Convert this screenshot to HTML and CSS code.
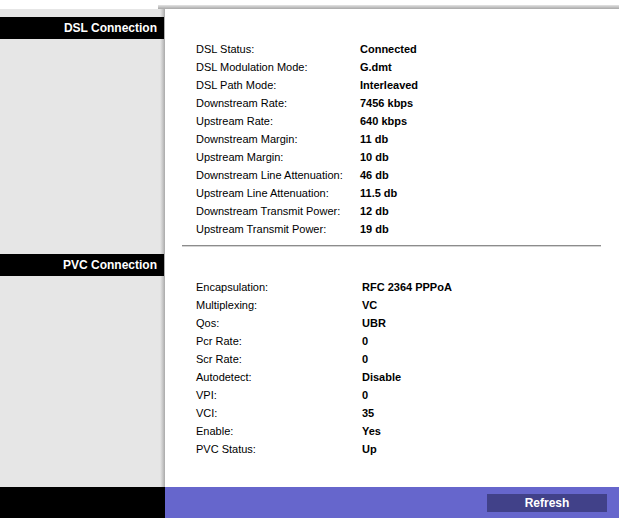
FILE: index.html
```html
<!DOCTYPE html>
<html lang="en">
<head>
    <meta charset="UTF-8">
    <title>Status - DSL Connection</title>
    <link rel="stylesheet" href="styles.css">
</head>
<body>
    <div class="top-strip">
        <div class="top-side"></div>
        <div class="top-line"></div>
    </div>

    <div class="section section-dsl">
        <div class="side">
            <div class="side-title">DSL Connection</div>
        </div>
        <div class="content">
            <div class="info">
                <div class="label">DSL Status:</div><div class="value">Connected</div>
                <div class="label">DSL Modulation Mode:</div><div class="value">G.dmt</div>
                <div class="label">DSL Path Mode:</div><div class="value">Interleaved</div>
                <div class="label">Downstream Rate:</div><div class="value">7456 kbps</div>
                <div class="label">Upstream Rate:</div><div class="value">640 kbps</div>
                <div class="label">Downstream Margin:</div><div class="value">11 db</div>
                <div class="label">Upstream Margin:</div><div class="value">10 db</div>
                <div class="label">Downstream Line Attenuation:</div><div class="value">46 db</div>
                <div class="label">Upstream Line Attenuation:</div><div class="value">11.5 db</div>
                <div class="label">Downstream Transmit Power:</div><div class="value">12 db</div>
                <div class="label">Upstream Transmit Power:</div><div class="value">19 db</div>
            </div>
            <div class="divider"></div>
        </div>
    </div>

    <div class="section section-pvc">
        <div class="side">
            <div class="side-title">PVC Connection</div>
        </div>
        <div class="content">
            <div class="info info-pvc">
                <div class="label">Encapsulation:</div><div class="value">RFC 2364 PPPoA</div>
                <div class="label">Multiplexing:</div><div class="value">VC</div>
                <div class="label">Qos:</div><div class="value">UBR</div>
                <div class="label">Pcr Rate:</div><div class="value">0</div>
                <div class="label">Scr Rate:</div><div class="value">0</div>
                <div class="label">Autodetect:</div><div class="value">Disable</div>
                <div class="label">VPI:</div><div class="value">0</div>
                <div class="label">VCI:</div><div class="value">35</div>
                <div class="label">Enable:</div><div class="value">Yes</div>
                <div class="label">PVC Status:</div><div class="value">Up</div>
            </div>
        </div>
    </div>

    <div class="footer">
        <div class="footer-side"></div>
        <div class="footer-main">
            <button class="button" type="button">Refresh</button>
        </div>
    </div>
</body>
</html>
```

FILE: styles.css
```css
body {
    margin: 0;
    font-family: "Liberation Sans", Arial, sans-serif;
    font-size: 11px;
    color: #000;
    background: #fff;
    width: 619px;
}

/* thin shaded line across the top of the page */
.top-strip {
    display: grid;
    grid-template-columns: 158px 1fr;
    height: 9px;
}

.top-line {
    margin-top: 5px;
    height: 4px;
    background: linear-gradient(#e4e4e4, #c4c4c4 50%, #a8a8a8);
}

.section {
    display: grid;
    grid-template-columns: 165px 1fr;
}

/* left column with its soft shadow on the right edge */
.side {
    background: linear-gradient(to right, #e6e6e6 0, #e6e6e6 160px, #d0d0d0 162px, #a9a9a9 165px);
}

.section-dsl .side {
    padding-top: 8px;
}

.section-pvc .side {
    padding-top: 4px;
}

.side-title {
    background: #000;
    color: #fff;
    font-weight: bold;
    font-size: 12px;
    height: 22px;
    line-height: 22px;
    text-align: right;
    padding-right: 7px;
    margin-right: 1px;
}

.content {
    padding-left: 31px;
}

.section-dsl .content {
    padding-top: 31px;
    padding-bottom: 3px;
}

.section-pvc .content {
    padding-top: 28px;
    padding-bottom: 29px;
}

.info {
    display: grid;
    grid-template-columns: 164px 1fr;
    grid-auto-rows: 18px;
    line-height: 18px;
}

.info-pvc {
    grid-template-columns: 166px 1fr;
}

.value {
    font-weight: bold;
}

.divider {
    margin: 7px 18px 0 -14px;
    height: 2px;
    background: linear-gradient(#8c8c8c 50%, #d4d4d4 50%);
}

.footer {
    display: grid;
    grid-template-columns: 165px 1fr;
    height: 31px;
}

.footer-side {
    background: #000;
}

.footer-main {
    background: #6666cc;
    display: flex;
    justify-content: flex-end;
    align-items: flex-start;
    padding: 7px 12px 0 0;
}

.button {
    width: 120px;
    height: 18px;
    padding: 0;
    border: none;
    background: #414189;
    color: #fff;
    font-family: "Liberation Sans", Arial, sans-serif;
    font-weight: bold;
    font-size: 12px;
    line-height: 18px;
    cursor: pointer;
}
```
